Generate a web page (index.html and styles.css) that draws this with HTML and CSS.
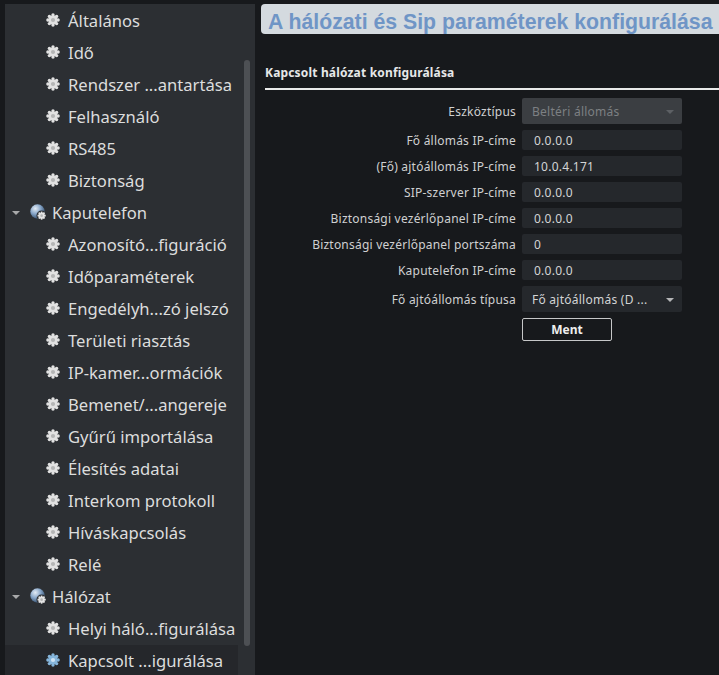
FILE: index.html
```html
<!DOCTYPE html>
<html lang="hu">
<head>
<meta charset="utf-8">
<title>Kapcsolt hálózat konfigurálása</title>
<link rel="stylesheet" href="styles.css">
</head>
<body>
<svg class="defs" width="0" height="0" aria-hidden="true">
  <defs>
    <g id="gear">
      <circle cx="7" cy="7" r="4.6" fill="currentColor"/>
      <g fill="currentColor">
        <circle cx="7" cy="1.9" r="1.7"/><circle cx="7" cy="12.1" r="1.7"/>
        <circle cx="1.9" cy="7" r="1.7"/><circle cx="12.1" cy="7" r="1.7"/>
        <circle cx="3.4" cy="3.4" r="1.7"/><circle cx="10.6" cy="3.4" r="1.7"/>
        <circle cx="3.4" cy="10.6" r="1.7"/><circle cx="10.6" cy="10.6" r="1.7"/>
      </g>
      <circle class="core" cx="7" cy="7" r="2.1"/>
    </g>
    <radialGradient id="globe" cx="0.35" cy="0.3" r="0.75">
      <stop offset="0" stop-color="#e4ecf5"/>
      <stop offset="0.5" stop-color="#86a5c8"/>
      <stop offset="1" stop-color="#2f4866"/>
    </radialGradient>
  </defs>
</svg>
<div class="page">
  <nav class="tree">
    <ul class="rows">
      <li class="row leaf"><svg class="gear" viewBox="0 0 14 14"><use href="#gear"/></svg><span>Általános</span></li>
      <li class="row leaf"><svg class="gear" viewBox="0 0 14 14"><use href="#gear"/></svg><span>Idő</span></li>
      <li class="row leaf"><svg class="gear" viewBox="0 0 14 14"><use href="#gear"/></svg><span>Rendszer ...antartása</span></li>
      <li class="row leaf"><svg class="gear" viewBox="0 0 14 14"><use href="#gear"/></svg><span>Felhasználó</span></li>
      <li class="row leaf"><svg class="gear" viewBox="0 0 14 14"><use href="#gear"/></svg><span>RS485</span></li>
      <li class="row leaf"><svg class="gear" viewBox="0 0 14 14"><use href="#gear"/></svg><span>Biztonság</span></li>
      <li class="row group"><i class="caret"></i><svg class="globe" viewBox="0 0 17 17"><circle cx="7.5" cy="7.5" r="7.2" fill="url(#globe)"/><circle cx="11.5" cy="11.5" r="5" fill="#2c2f33"/><g transform="translate(7.3 7.3) scale(.62)"><use href="#gear" color="#e4e4e4"/></g></svg><span>Kaputelefon</span></li>
      <li class="row leaf"><svg class="gear" viewBox="0 0 14 14"><use href="#gear"/></svg><span>Azonosító...figuráció</span></li>
      <li class="row leaf"><svg class="gear" viewBox="0 0 14 14"><use href="#gear"/></svg><span>Időparaméterek</span></li>
      <li class="row leaf"><svg class="gear" viewBox="0 0 14 14"><use href="#gear"/></svg><span>Engedélyh...zó jelszó</span></li>
      <li class="row leaf"><svg class="gear" viewBox="0 0 14 14"><use href="#gear"/></svg><span>Területi riasztás</span></li>
      <li class="row leaf"><svg class="gear" viewBox="0 0 14 14"><use href="#gear"/></svg><span>IP-kamer...ormációk</span></li>
      <li class="row leaf"><svg class="gear" viewBox="0 0 14 14"><use href="#gear"/></svg><span>Bemenet/...angereje</span></li>
      <li class="row leaf"><svg class="gear" viewBox="0 0 14 14"><use href="#gear"/></svg><span>Gyűrű importálása</span></li>
      <li class="row leaf"><svg class="gear" viewBox="0 0 14 14"><use href="#gear"/></svg><span>Élesítés adatai</span></li>
      <li class="row leaf"><svg class="gear" viewBox="0 0 14 14"><use href="#gear"/></svg><span>Interkom protokoll</span></li>
      <li class="row leaf"><svg class="gear" viewBox="0 0 14 14"><use href="#gear"/></svg><span>Híváskapcsolás</span></li>
      <li class="row leaf"><svg class="gear" viewBox="0 0 14 14"><use href="#gear"/></svg><span>Relé</span></li>
      <li class="row group"><i class="caret"></i><svg class="globe" viewBox="0 0 17 17"><circle cx="7.5" cy="7.5" r="7.2" fill="url(#globe)"/><circle cx="11.5" cy="11.5" r="5" fill="#2c2f33"/><g transform="translate(7.3 7.3) scale(.62)"><use href="#gear" color="#e4e4e4"/></g></svg><span>Hálózat</span></li>
      <li class="row leaf"><svg class="gear" viewBox="0 0 14 14"><use href="#gear"/></svg><span>Helyi háló...figurálása</span></li>
      <li class="row leaf selected"><svg class="gear" viewBox="0 0 14 14"><use href="#gear"/></svg><span>Kapcsolt ...igurálása</span></li>
    </ul>
    <div class="scrollbar"></div>
  </nav>
  <main class="content">
    <h1 class="title"><span>A hálózati és Sip paraméterek konfigurálása</span></h1>
    <h2 class="section">Kapcsolt hálózat konfigurálása</h2>
    <form class="form">
      <div class="field tall"><label>Eszköztípus</label><div class="control select disabled"><span>Beltéri állomás</span><i class="arrow"></i></div></div>
      <div class="field"><label>Fő állomás IP-címe</label><div class="control">0.0.0.0</div></div>
      <div class="field"><label>(Fő) ajtóállomás IP-címe</label><div class="control">10.0.4.171</div></div>
      <div class="field"><label>SIP-szerver IP-címe</label><div class="control">0.0.0.0</div></div>
      <div class="field"><label>Biztonsági vezérlőpanel IP-címe</label><div class="control">0.0.0.0</div></div>
      <div class="field"><label>Biztonsági vezérlőpanel portszáma</label><div class="control">0</div></div>
      <div class="field"><label>Kaputelefon IP-címe</label><div class="control">0.0.0.0</div></div>
      <div class="field tall"><label>Fő ajtóállomás típusa</label><div class="control select"><span>Fő ajtóállomás (D ...</span><i class="arrow"></i></div></div>
      <div class="actions"><button type="button" class="save">Ment</button></div>
    </form>
  </main>
</div>
</body>
</html>
```
FILE: styles.css
```css
* { box-sizing: border-box; }
html, body { margin: 0; height: 100%; }
body {
  background: #17191c;
  color: #d8d9da;
  font-family: "Noto Sans", "Open Sans", sans-serif;
  overflow: hidden;
}
.defs { position: absolute; }
.page { display: flex; height: 675px; padding-top: 4px; overflow: hidden; }

.tree {
  position: relative;
  flex: 0 0 250px;
  margin-left: 5px;
  background: #2c2f33;
  overflow: hidden;
}
.rows { list-style: none; margin: 0; padding: 1px 0 0; }
.row {
  display: flex;
  align-items: center;
  height: 32px;
  font-size: 16.6px;
  line-height: 30px;
  color: #dcdddd;
  white-space: nowrap;
}
.row span { margin-top: -1px; }
.leaf { padding-left: 41px; }
.gear { width: 14px; height: 14px; margin-right: 8px; color: #e2e2e2; flex: none; margin-top: -2px; }
.core { fill: var(--core, #b4b5b5); }
.selected { width: 233px; background: #25272b; }
.selected .gear { color: #86b6dc; --core: #cfe3f3; }
.group { padding-left: 7px; }
.caret {
  width: 0; height: 0; flex: none;
  border-left: 4px solid transparent;
  border-right: 4px solid transparent;
  border-top: 4px solid #a8a9aa;
  margin-right: 10px;
}
.globe { width: 17px; height: 17px; flex: none; margin-right: 5px; margin-top: -2px; }
.scrollbar {
  position: absolute;
  left: 239px; top: 56px;
  width: 6px; height: 586px;
  background: #4d5054;
  border-radius: 3px;
}

.content { flex: 1; min-width: 0; padding-left: 6px; }
.title {
  margin: 0;
  height: 30px;
  background: #d4dadf;
  border-radius: 4px 0 0 4px;
  overflow: hidden;
  padding-left: 7px;
  font: bold 21.25px/37px "Liberation Sans", Arial, sans-serif;
  color: #6f95c6;
  white-space: nowrap;
}
.section {
  margin: 30px 0 0 4px;
  height: 26px;
  font-size: 12px;
  line-height: 18px;
  letter-spacing: .17px;
  font-weight: 700;
  color: #e6e7e8;
  border-bottom: 2px solid #e9eaea;
}
.form {
  display: flex;
  flex-direction: column;
  gap: 6px;
  margin-top: 8px;
}
.field { display: flex; align-items: center; height: 20px; }
.field.tall { height: 26px; }
.field label {
  flex: 0 0 255px;
  padding-top: 1px;
  text-align: right;
  font-size: 12px;
  letter-spacing: .22px;
  color: #cfd0d1;
  white-space: nowrap;
}
.control {
  width: 160px;
  height: 100%;
  margin-left: 6px;
  padding-left: 12px;
  background: #25282c;
  border-radius: 2px;
  font-size: 12px;
  letter-spacing: .25px;
  line-height: 21px;
  color: #d3d4d5;
}
.select {
  display: flex;
  align-items: center;
  justify-content: space-between;
  padding: 1px 8px 0 10px;
}
.disabled { background: #3b3e42; color: #7d8083; }
.arrow {
  width: 0; height: 0;
  border-left: 4px solid transparent;
  border-right: 4px solid transparent;
  border-top: 4px solid #b5b6b7;
}
.disabled .arrow { border-top-color: #5d6064; }
.actions { padding-left: 261px; }
.save {
  display: block;
  width: 90px;
  height: 23px;
  padding: 0;
  background: #17191c;
  border: 1px solid #c6c7c8;
  border-radius: 2px;
  font: 700 12px "Noto Sans", sans-serif;
  color: #eeeeee;
}
```
